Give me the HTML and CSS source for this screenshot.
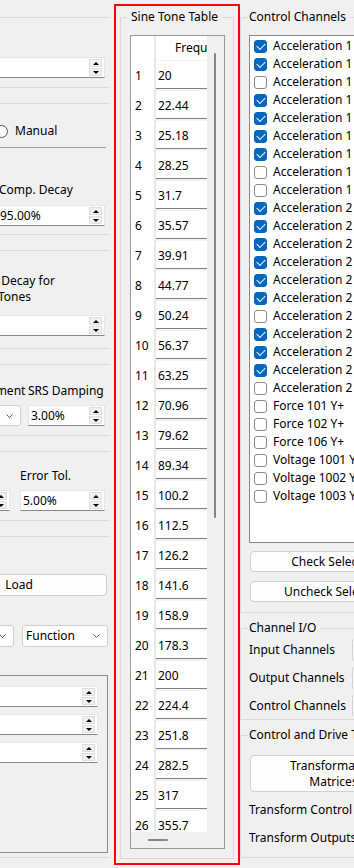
FILE: index.html
```html
<!DOCTYPE html>
<html lang="en">
<head>
  <meta charset="UTF-8" />
  <title>Sine Tone Control Setup</title>
  <link rel="stylesheet" href="styles.css">
</head>
<body>
  <div class="window">
    <!-- settings column, only its right edge is on screen -->
    <div class="left-pane">
      <div class="left-inner">
        <div class="lgroup g1">
          <div class="spin spin-line spin-full"><span class="spin-text">4</span></div>
        </div>

        <div class="lgroup g2">
          <div class="radios">
            <span class="radio-opt opt-auto"><span class="radio"></span>Automatic</span>
            <span class="radio-opt"><span class="radio"></span>Manual</span>
          </div>
          <div class="rule"></div>
          <div class="lbl-comp">Comp. Decay</div>
          <div class="spin spin-line spin-pct"><span class="spin-text">95.00%</span></div>
        </div>

        <div class="lgroup g3">
          <div class="lbl-wrap">Max. Decay for<br>Sine Tones</div>
          <div class="spin spin-line spin-mid"><span class="spin-text">90.00%</span></div>
        </div>

        <div class="lgroup g4">
          <div class="pair">
            <span class="col-a lbl-adjust">Adjustment</span>
            <span class="col-b">SRS Damping</span>
          </div>
          <div class="pair ctrl-row">
            <div class="combo col-a"><span class="combo-text">Auto</span></div>
            <div class="spin col-b"><span class="spin-text">3.00%</span></div>
          </div>
        </div>

        <div class="lgroup g5">
          <div class="pair">
            <span class="col-a5">Max. Drive</span>
            <span class="col-b5">Error Tol.</span>
          </div>
          <div class="pair ctrl-row">
            <div class="spin col-a5"><span class="spin-text">10.00%</span></div>
            <div class="spin col-b5"><span class="spin-text">5.00%</span></div>
          </div>
        </div>

        <div class="lgroup g6">
          <div class="btn btn-load">Load</div>
          <div class="pair combos">
            <div class="combo combo-left"><span class="combo-text">Linear</span></div>
            <div class="combo combo-fn"><span class="combo-text">Function</span></div>
          </div>
          <div class="subframe">
            <div class="spin sub-spin"><span class="spin-text">0</span></div>
            <div class="spin sub-spin"><span class="spin-text">0</span></div>
            <div class="spin sub-spin"><span class="spin-text">0</span></div>
          </div>
        </div>
      </div>
    </div>

    <!-- sine tone table -->
    <div class="table-pane">
      <fieldset class="table-group">
        <legend>Sine Tone Table</legend>
        <div class="grid">
          <div class="grid-main">
            <div class="grid-cells">
              <div class="grid-head">
                <span class="corner"></span>
                <span class="strip"></span>
                <span class="col-head">Frequency (Hz)</span>
              </div>
              <div class="grid-body" id="rows"></div>
            </div>
            <div class="vscroll"><div class="vthumb"></div></div>
          </div>
          <div class="hscroll"><div class="hthumb"></div></div>
        </div>
      </fieldset>
    </div>

    <!-- channels column, cut off on the right -->
    <div class="right-pane">
      <div class="right-inner">
        <fieldset class="group cc-group">
          <legend>Control Channels</legend>
          <div class="chan-list" id="channels"></div>
          <div class="btn btn-check">Check Selected</div>
          <div class="btn btn-uncheck">Uncheck Selected</div>
        </fieldset>

        <fieldset class="group io-group">
          <legend>Channel I/O</legend>
          <div class="io-rows">
            <div class="io-row"><span class="io-label">Input Channels</span><span class="io-combo"></span></div>
            <div class="io-row"><span class="io-label">Output Channels</span><span class="io-combo"></span></div>
            <div class="io-row"><span class="io-label">Control Channels</span><span class="io-combo"></span></div>
          </div>
        </fieldset>

        <fieldset class="group drive-group">
          <legend>Control and Drive Transformation</legend>
          <div class="btn btn-matrix">Transformation<br>Matrices</div>
          <div class="drive-label">Transform Control Channels</div>
          <div class="drive-label second">Transform Outputs</div>
        </fieldset>
      </div>
    </div>
  </div>

  <script>
    const freqs = [
      "20", "22.44", "25.18", "28.25", "31.7", "35.57", "39.91", "44.77", "50.24",
      "56.37", "63.25", "70.96", "79.62", "89.34", "100.2", "112.5", "126.2", "141.6",
      "158.9", "178.3", "200", "224.4", "251.8", "282.5", "317", "355.7", "399.1",
    ];

    document.getElementById("rows").innerHTML = freqs
      .map((f, i) => `<div class="row"><span class="num">${i + 1}</span><span class="strip"></span><span class="cell">${f}</span></div>`)
      .join("");

    const checked = [1, 1, 0, 1, 1, 1, 1, 0, 0, 1, 1, 1, 1, 1, 1, 0, 1, 1, 1, 0, 0, 0, 0, 0, 0, 0];
    const names = [];
    for (let i = 1; i <= 9; i++) names.push(`Acceleration 1 (10${i} Y+)`);
    for (let i = 1; i <= 11; i++) names.push(`Acceleration 2 (2${String(i).padStart(2, "0")} Y+)`);
    names.push("Force 101 Y+", "Force 102 Y+", "Force 106 Y+", "Voltage 1001 Y+", "Voltage 1002 Y+", "Voltage 1003 Y+");

    document.getElementById("channels").innerHTML = names
      .map((n, i) => `<div class="chan"><span class="check${checked[i] ? " on" : ""}"></span>${n}</div>`)
      .join("");

    // spin arrows and combo chevrons
    document.querySelectorAll(".spin").forEach((s) => {
      s.insertAdjacentHTML("beforeend", '<span class="spin-btns"><span class="spin-btn up"></span><span class="spin-btn down"></span></span>');
    });
    document.querySelectorAll(".combo").forEach((c) => {
      c.insertAdjacentHTML("beforeend", '<svg width="7" height="4" viewBox="0 0 7 4"><path d="M0.5 0.5 L3.5 3.5 L6.5 0.5" fill="none" stroke="#5a5a5a" stroke-width="1"/></svg>');
    });
  </script>
</body>
</html>
```

FILE: styles.css
```css
* {
  box-sizing: border-box;
}

body {
  margin: 0;
  background: #f0f0f0;
  font-family: "Noto Sans", "Open Sans", sans-serif;
  font-size: 12px;
  line-height: 16px;
  color: #000;
  overflow: hidden;
}

.window {
  display: flex;
  width: 354px;
  height: 868px;
  overflow: hidden;
}

/* Left settings column */
.left-pane {
  width: 114px;
  flex: none;
  overflow: hidden;
}

.left-inner {
  width: 300px;
  margin-left: -190px;
}

.lgroup {
  border-top: 1px solid #dcdcdc;
  border-bottom: 1px solid #dcdcdc;
  margin-top: 15px;
}

.g1 { margin-top: 17px; padding: 39px 0 9px; }
.g2 { padding: 19px 0 8px; }
.g3 { padding: 22px 0 12px; }
.g4 { padding: 18px 0 9px; }
.g5 { padding: 16px 0 9px; }
.g6 { padding: 37px 0 4px; }

.spin {
  display: flex;
  height: 21px;
  background: #fff;
  border: 1px solid #e6e6e6;
  border-bottom-color: #868686;
}

.spin-text {
  flex: 1;
  padding-left: 2px;
  line-height: 19px;
  white-space: nowrap;
  overflow: hidden;
}

.spin-btns {
  width: 13px;
  flex: none;
  display: flex;
  flex-direction: column;
  gap: 1px;
  margin: 1px 2px 1px 0;
}

.spin-btn {
  flex: 1;
  background: #f0f0f0;
  border: 1px solid #dedede;
  display: flex;
  align-items: center;
  justify-content: center;
}

.spin-btn.up::after {
  content: "";
  border-left: 3px solid transparent;
  border-right: 3px solid transparent;
  border-bottom: 3px solid #000;
}

.spin-btn.down::after {
  content: "";
  border-left: 3px solid transparent;
  border-right: 3px solid transparent;
  border-top: 3px solid #000;
}

.spin-line { margin-right: 5px; }
.spin-full { margin-left: 10px; }
.spin-pct { margin-top: 7px; margin-left: 187px; }
.spin-mid { margin-top: 10px; margin-left: 100px; }

.radios {
  display: flex;
  align-items: center;
  height: 16px;
}

.radio-opt {
  display: flex;
  align-items: center;
  gap: 7px;
}

.opt-auto {
  width: 185px;
  padding-left: 95px;
}

.radio {
  width: 13px;
  height: 13px;
  flex: none;
  border: 1px solid #5c5c5c;
  border-radius: 50%;
  background: #fbfbfb;
}

.rule {
  height: 1px;
  background: #a0a0a0;
  margin: 8px 4px 0 0;
}

.lbl-comp {
  margin-top: 34px;
  padding-left: 189px;
}

.lbl-wrap {
  padding-left: 161px;
  white-space: nowrap;
}

.pair {
  display: flex;
  justify-content: flex-end;
  margin-right: 5px;
  white-space: nowrap;
}

.ctrl-row { margin-top: 6px; }

.col-a { width: 80px; flex: none; }
.col-b { width: 77px; flex: none; margin-left: 7px; }
.lbl-adjust { padding-left: 19px; }

.col-a5 { width: 80px; flex: none; }
.col-b5 { width: 85px; flex: none; margin-left: 10px; }

.combo {
  display: flex;
  align-items: center;
  height: 22px;
  border: 1px solid #d0d0d0;
  border-radius: 3px;
  background: #fdfdfd;
  padding: 0 7px 0 3px;
}

.g4 .combo { height: 21px; }

.combo-text {
  flex: 1;
  white-space: nowrap;
  overflow: hidden;
}

.combo svg {
  flex: none;
}

.combos {
  margin-top: 29px;
  margin-right: 2px;
}

.combo-left { width: 90px; }
.combo-fn { width: 86px; margin-left: 8px; }

.subframe {
  margin: 28px 2px 0 40px;
  height: 178px;
  border: 1px solid #8a8a8a;
  padding: 10px 4px 0 0;
}

.sub-spin {
  margin: 0 5px 7px 20px;
}

/* Buttons */
.btn {
  display: flex;
  align-items: center;
  justify-content: center;
  width: 167px;
  height: 21px;
  margin-left: 1px;
  border: 1px solid #d0d0d0;
  border-radius: 4px;
  background: #fdfdfd;
  white-space: nowrap;
}

.btn-load {
  width: auto;
  height: 22px;
  margin: 0 3px 0 121px;
}

.btn-check { margin-top: 8px; }
.btn-uncheck { margin-top: 9px; }

.btn-matrix {
  height: 37px;
  margin-top: 12px;
  text-align: center;
}

/* Sine tone table */
.table-pane {
  width: 126px;
  height: 861px;
  margin-top: 4px;
  border: 2px solid #ff0000;
  flex: none;
}

.table-group {
  margin: 3px 0 0 4px;
  width: 114px;
  min-width: 0;
  padding: 0 8px 9px 9px;
  border: 1px solid #d9d9d9;
}

.table-group legend {
  padding: 0 4px;
  margin-left: -3px;
  white-space: nowrap;
}

.grid {
  margin-top: 10px;
  width: 95px;
  height: 814px;
  border: 1px solid #999;
  background: #fff;
  display: flex;
  flex-direction: column;
}

.grid-main {
  display: flex;
  height: 796px;
}

.grid-cells {
  width: 76px;
  display: flex;
  flex-direction: column;
}

.grid-head {
  display: flex;
  height: 24px;
  flex: none;
  background: #fff;
}

.corner {
  width: 23px;
}

.strip {
  width: 2px;
  flex: none;
  background: #e8e8e8;
}

.col-head {
  width: 51px;
  padding-left: 19px;
  line-height: 24px;
  white-space: nowrap;
  overflow: hidden;
}

.grid-body {
  flex: 1;
  overflow: hidden;
  background: #f3f3f3;
}

.row {
  display: flex;
  height: 30px;
}

.num {
  width: 23px;
  padding-left: 4px;
  line-height: 31px;
  background: #fff;
}

.cell {
  width: 51px;
  height: 28px;
  margin-top: 1px;
  padding: 2px 0 0 2px;
  line-height: 25px;
  background: #fff;
  border-bottom: 1px solid #808080;
}

.vscroll {
  width: 17px;
  padding-top: 17px;
  background: #f0f0f0;
}

.vthumb {
  width: 2px;
  height: 465px;
  margin-left: 7px;
  border-radius: 1px;
  background: #858585;
}

.hscroll {
  height: 16px;
  display: flex;
  align-items: center;
  background: #f0f0f0;
}

.hthumb {
  width: 20px;
  height: 2px;
  margin-left: 17px;
  border-radius: 1px;
  background: #858585;
}

/* Right channels column */
.right-pane {
  width: 114px;
  flex: none;
  overflow: hidden;
}

.right-inner {
  width: 300px;
}

.group {
  width: 300px;
  min-width: 0;
  margin: 0;
  border: 1px solid #dcdcdc;
  padding: 0 0 10px 8px;
}

.group legend {
  padding: 0 4px 0 1px;
  margin-left: -1px;
  white-space: nowrap;
}

.cc-group { margin-top: 9px; }

.chan-list {
  margin-top: 10px;
  width: 200px;
  height: 508px;
  border: 1px solid #828790;
  background: #fff;
  padding-top: 1px;
  overflow: hidden;
}

.chan {
  display: flex;
  align-items: center;
  gap: 6px;
  height: 18px;
  padding-left: 4px;
  white-space: nowrap;
}

.check {
  width: 13px;
  height: 13px;
  flex: none;
  border: 1px solid #8a8a8a;
  border-radius: 3px;
  background: #fff;
  display: flex;
  align-items: center;
  justify-content: center;
}

.check.on {
  background: #0067c0;
  border-color: #0067c0;
}

.check.on::after {
  content: "";
  width: 7px;
  height: 4px;
  margin-top: -2px;
  border-left: 1.5px solid #fff;
  border-bottom: 1.5px solid #fff;
  transform: rotate(-45deg);
}

.io-group {
  margin-top: 7px;
  padding-bottom: 2px;
}

.io-rows {
  display: flex;
  flex-direction: column;
  gap: 6px;
  padding-top: 3px;
}

.io-row {
  display: flex;
  align-items: center;
  height: 22px;
}

.io-label {
  width: 103px;
  flex: none;
  white-space: nowrap;
}

.io-combo {
  width: 100px;
  height: 22px;
  border: 1px solid #d0d0d0;
  border-radius: 3px;
  background: #fdfdfd;
}

.drive-group {
  margin-top: 7px;
  padding-bottom: 11px;
}

.drive-label {
  margin-top: 10px;
  white-space: nowrap;
}

.drive-label.second {
  margin-top: 12px;
}
```
